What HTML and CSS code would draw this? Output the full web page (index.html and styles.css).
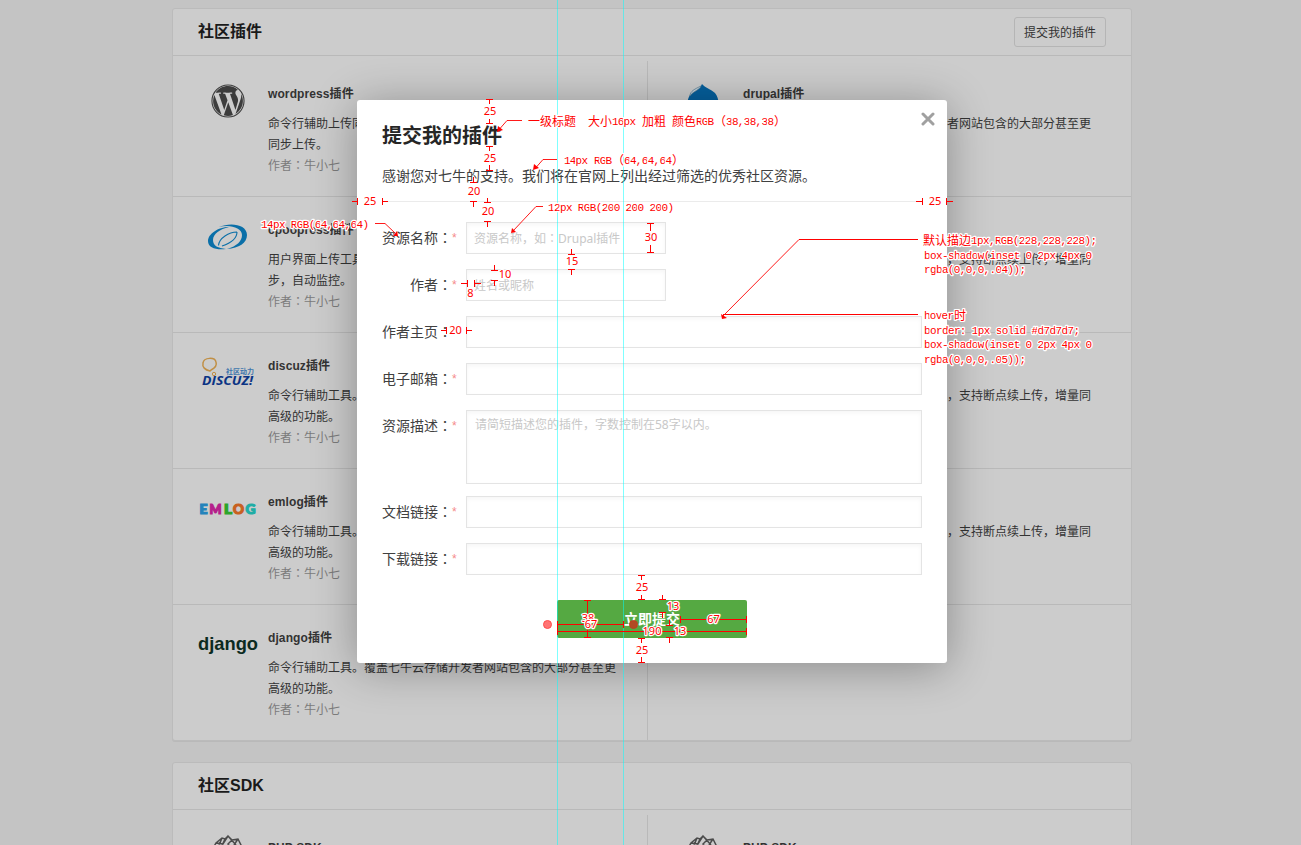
FILE: index.html
```html
<!DOCTYPE html>
<html>
<head>
<meta charset="utf-8">
<title>社区插件</title>
<link rel="stylesheet" href="styles.css">
</head>
<body>
<main class="page">
  <section class="panel">
    <header class="panel-head"><h2>社区插件</h2><a class="btn-outline">提交我的插件</a></header>
    <div class="columns">
      <div class="col col-left">
        <article class="item">
          <div class="logo"><svg width="34" height="34" viewBox="-0.3 -0.3 24.6 24.6"><path fill="#3c3c3c" d="M21.469 6.825c.84 1.537 1.318 3.3 1.318 5.175 0 3.979-2.156 7.456-5.363 9.325l3.295-9.527c.615-1.54.82-2.771.82-3.864 0-.405-.026-.78-.07-1.11m-7.981.105c.647-.03 1.232-.105 1.232-.105.582-.075.514-.93-.067-.899 0 0-1.755.135-2.88.135-1.064 0-2.85-.15-2.85-.15-.585-.03-.661.855-.075.885 0 0 .54.061 1.125.09l1.68 4.605-2.37 7.08L5.354 6.9c.649-.03 1.234-.1 1.234-.1.585-.075.516-.93-.065-.896 0 0-1.746.138-2.874.138-.2 0-.438-.008-.69-.015C4.911 3.15 8.235 1.215 12 1.215c2.809 0 5.365 1.072 7.286 2.833-.046-.003-.091-.009-.141-.009-1.06 0-1.812.923-1.812 1.914 0 .89.513 1.643 1.06 2.531.411.72.89 1.643.89 2.977 0 .915-.354 1.994-.821 3.479l-1.075 3.585-3.9-11.61.001.014zM12 22.784c-1.059 0-2.081-.153-3.048-.437l3.237-9.406 3.315 9.087c.024.053.05.101.078.149-1.12.393-2.325.609-3.582.609M1.211 12c0-1.564.336-3.05.935-4.39L7.29 21.709C3.694 19.96 1.212 16.271 1.211 12"/><circle cx="12" cy="12" r="11.6" fill="none" stroke="#3c3c3c" stroke-width=".8"/></svg></div>
          <div class="info"><h3>wordpress插件</h3><p>命令行辅助上传同步工具。覆盖七牛云存储开发者网站包含的大<br>同步上传。</p><p class="author">作者<i>：</i>牛小七</p></div>
        </article>
        <article class="item">
          <div class="logo"><svg width="42" height="28" viewBox="0 0 42 28"><g fill="#0a6fa8"><path d="M22 4C11 4 1 11 1 18c0 7 8 9 18 8-8-1-13-3-13-9C6 11 13 6 22 4Z"/><path d="M12 4C23-1 40 1 40 12c0 8-8 13-20 14 10-3 15-8 15-14C35 5 23 1 12 4Z"/></g><path d="M30 9C22 9 12 15 11.500 22.500M30 9C30 15 24 20 15 23" fill="none" stroke="#0a6fa8" stroke-width="1.100"/></svg></div>
          <div class="info"><h3>cpoopress插件</h3><p>用户界面上传工具，实现文件批量传输，支持断点续上传，增量同<br>步，自动监控。</p><p class="author">作者<i>：</i>牛小七</p></div>
        </article>
        <article class="item">
          <div class="logo"><svg width="56" height="32" viewBox="0 0 56 32"><path d="M10 14c-5-1-8-4-7-8 1-6 12-6 13-1 1 3-1 6-5 8Z" fill="none" stroke="#c08f45" stroke-width="1.5"/><circle cx="14" cy="17" r="1.7" fill="none" stroke="#c08f45"/><text class="lg-cn" x="26" y="17" textLength="28">社区动力</text><text class="lg-dz" x="2" y="28" textLength="51" lengthAdjust="spacingAndGlyphs">DISCUZ!</text></svg></div>
          <div class="info"><h3>discuz插件</h3><p>命令行辅助工具。覆盖七牛云存储开发者网站包含的大部分甚至更<br>高级的功能。</p><p class="author">作者<i>：</i>牛小七</p></div>
        </article>
        <article class="item">
          <div class="logo"><svg width="58" height="16" viewBox="0 0 58 16"><g class="lg-em"><text x="0.500" y="13" fill="#2483bb" stroke="#2483bb" textLength="8" lengthAdjust="spacingAndGlyphs">E</text><text x="10.500" y="13" fill="#b51f8b" stroke="#b51f8b" textLength="12" lengthAdjust="spacingAndGlyphs">M</text><text x="25" y="13" fill="#2ca52c" stroke="#2ca52c" textLength="8" lengthAdjust="spacingAndGlyphs">L</text><text x="34" y="13" fill="#c8601f" stroke="#c8601f" textLength="11" lengthAdjust="spacingAndGlyphs">O</text><text x="46.500" y="13" fill="#1fada5" stroke="#1fada5" textLength="10" lengthAdjust="spacingAndGlyphs">G</text></g></svg></div>
          <div class="info"><h3>emlog插件</h3><p>命令行辅助工具。覆盖七牛云存储开发者网站包含的大部分甚至更<br>高级的功能。</p><p class="author">作者<i>：</i>牛小七</p></div>
        </article>
        <article class="item">
          <div class="logo"><svg width="62" height="28" viewBox="0 0 62 28"><text class="lg-dj" x="1" y="19" textLength="60" lengthAdjust="spacingAndGlyphs">django</text></svg></div>
          <div class="info"><h3>django插件</h3><p>命令行辅助工具。覆盖七牛云存储开发者网站包含的大部分甚至更<br>高级的功能。</p><p class="author">作者<i>：</i>牛小七</p></div>
        </article>
      </div>
      <div class="col col-right">
        <article class="item">
          <div class="logo"><svg width="32" height="36" viewBox="0 0 32 36"><path d="M15 1c3 4 9 5 13 9 8 10 1 25-12 25C2 35-3 21 3 12 7 8 13 6 15 1Z" fill="#055f9c"/><path d="M14 3C13 7 6 8 3 13c0-5 5-7 11-10Z" fill="#c5d2da" stroke="#52788f" stroke-width=".7"/></svg></div>
          <div class="info"><h3>drupal插件</h3><p>命令行辅助工具。覆盖七牛云存储开发者网站包含的大部分甚至更<br>高级的功能。</p></div>
        </article>
        <article class="item"><div class="logo"></div><div class="info info-plain"><p>用户界面上传工具，实现文件批量传输，支持断点续上传，增量同</p></div></article>
        <article class="item"><div class="logo"></div><div class="info info-plain"><p>用户界面上传工具，实现文件批量传输，支持断点续上传，增量同</p></div></article>
        <article class="item"><div class="logo"></div><div class="info info-plain"><p>用户界面上传工具，实现文件批量传输，支持断点续上传，增量同</p></div></article>
        <article class="item"></article>
      </div>
    </div>
  </section>
  <section class="panel">
    <header class="panel-head"><h2>社区SDK</h2></header>
    <div class="columns">
      <div class="col col-left"><article class="item"><div class="logo"><svg width="34" height="42" viewBox="0 0 34 42"><path d="M1 16 5 9l6-5 3 1 3-3 4 4 6-1 4 8M5 9l7 1 5-8 8 9M11 4l-5 12M14 5 9 16M21 6l-4 4 6 7M27 5l-4 6" fill="none" stroke="#4b4b4b" stroke-width="1.500"/></svg></div><div class="info"><h3>PHP SDK</h3></div></article></div>
      <div class="col col-right"><article class="item"><div class="logo"><svg width="34" height="42" viewBox="0 0 34 42"><path d="M1 16 5 9l6-5 3 1 3-3 4 4 6-1 4 8M5 9l7 1 5-8 8 9M11 4l-5 12M14 5 9 16M21 6l-4 4 6 7M27 5l-4 6" fill="none" stroke="#4b4b4b" stroke-width="1.500"/></svg></div><div class="info"><h3>PHP SDK</h3></div></article></div>
    </div>
  </section>
</main>

<div class="modal">
  <svg class="close" width="14" height="14" viewBox="0 0 14 14"><path d="M2 2l10 10M12 2 2 12" stroke="#a0a0a0" stroke-width="3" stroke-linecap="round"/></svg>
  <h1>提交我的插件</h1>
  <p class="lead">感谢您对七牛的支持。我们将在官网上列出经过筛选的优秀社区资源。</p>
  <form class="form">
    <div class="field"><label>资源名称<i>：</i></label><b>*</b><div class="input short">资源名称，如<i>：</i>Drupal插件</div></div>
    <div class="field"><label>作者<i>：</i></label><b>*</b><div class="input short">姓名或昵称</div></div>
    <div class="field"><label>作者主页<i>：</i></label><b></b><div class="input"></div></div>
    <div class="field"><label>电子邮箱<i>：</i></label><b>*</b><div class="input"></div></div>
    <div class="field field-area"><label>资源描述<i>：</i></label><b>*</b><div class="input area">请简短描述您的插件，字数控制在58字以内。</div></div>
    <div class="field"><label>文档链接<i>：</i></label><b>*</b><div class="input"></div></div>
    <div class="field"><label>下载链接<i>：</i></label><b>*</b><div class="input"></div></div>
    <div class="submit">立即提交</div>
  </form>
</div>

<svg class="marks" width="1301" height="845" viewBox="0 0 1301 845">
  <path class="guide" d="M557.500 0V845M623.500 0V845"/>
  <circle class="dot" cx="547.500" cy="624.500" r="4"/>
  <circle class="dot dark" cx="633.500" cy="624.500" r="4"/>
  <path class="rule" d="M486 99.500h7M489.500 99v5M486 123.500h7M489.500 119v4M486 146.500h7M489.500 146v5M486 170.500h7M489.500 165v5
    M470 182.500h7M473.500 177v5M470 201.500h7M473.500 201v6M484 202.500h7M487.500 198v4M484 221.500h7M487.500 221v6
    M352 201.500h6M357.500 198v7M382 201.500h6M382.500 198v7M916 201.500h6M922.500 198v7M947 201.500h6M946.500 198v7
    M647 223.500h7M650.500 223v8M647 252.500h7M650.500 245v7M568 254.500h7M571.500 249v5M568 269.500h7M571.500 269v6
    M491 270.500h7M494.500 265v5M491 280.500h7M494.500 280v6M461 283.500h6M467.500 280v7M474.500 280v7M474 283.500h7
    M441 330.500h5M446.500 327v7M466.500 327v7M466 330.500h6
    M638 575.500h7M641.500 575v5M638 599.500h7M641.500 595v5M638 638.500h7M641.500 638v5M638 662.500h7M641.500 657v5
    M659 599.500h7M662.500 595v5M659 612.500h7M662.500 612v6M666 625.500h7M669.500 620v5M666 637.500h7M669.500 637v6
    M584 600.500h7M584 637.500h7M587.500 600v38M557 624.500h67M557.500 621v7M623.500 621v7
    M681 619.500h66M680.500 616v7M746.500 616v7M557 631.500h190M557.500 628v7M746.500 628v7
    M918 239.500H799M918 314.500H723"/>
  <path class="leader" d="M522 120.500H507l-7 8M557 159.500H543l-7 8M543 206.500H536L513 231M375 223.500H385L395 233M799 239.500 723 316"/>
  <path class="tip" d="M497 132l1-6 5 4ZM533 170l1-6 5 4ZM511 233l1-5 4 4ZM398 236l-5 0 4-5ZM721 314l6 4-5 1Z"/>
  <g class="num">
    <text x="490" y="115">25</text><text x="490" y="162">25</text><text x="474" y="195">20</text><text x="488" y="215">20</text>
    <text x="370" y="205">25</text><text x="935" y="205">25</text><text x="651" y="241">30</text><text x="572" y="265">15</text>
    <text x="505" y="278">10</text><text x="470.500" y="297">8</text><text x="455.500" y="334">20</text><text x="642" y="591">25</text>
    <text x="673" y="610">13</text><text x="588" y="622">38</text><text x="591" y="628">67</text><text x="713.500" y="623">67</text>
    <text x="652" y="635">190</text><text x="680" y="635">13</text><text x="642" y="654">25</text>
  </g>
  <g class="note">
    <text x="528" y="125.500">一级标题</text><text x="588" y="125.500">大小</text><text x="612" y="125" textLength="24">16px</text><text x="642" y="125.500">加粗</text><text x="672" y="125.500">颜色</text><text x="696" y="125" textLength="18">RGB</text><text x="714" y="125.500">（</text><text x="726" y="125" textLength="48">38,38,38</text><text x="774" y="125.500">）</text>
    <text x="564" y="164" textLength="24">14px</text><text x="594" y="164" textLength="18">RGB</text><text x="612" y="164.500">（</text><text x="624" y="164" textLength="48">64,64,64</text><text x="672" y="164.500">）</text>
    <text x="548" y="211" textLength="126">12px RGB(200 200 200)</text>
    <text x="261" y="228" textLength="108">14px RGB(64,64,64)</text>
    <text x="923" y="244.500">默认描边</text><text x="971" y="244" textLength="126">1px,RGB(228,228,228);</text>
    <text x="924" y="259" textLength="168">box-shadow(inset 0 2px 4px 0</text>
    <text x="924" y="273" textLength="102">rgba(0,0,0,.04));</text>
    <text x="924" y="319" textLength="30">hover</text><text x="954" y="319.500">时</text>
    <text x="924" y="334" textLength="156">border: 1px solid #d7d7d7;</text>
    <text x="924" y="348" textLength="168">box-shadow(inset 0 2px 4px 0</text>
    <text x="924" y="363" textLength="102">rgba(0,0,0,.05));</text>
  </g>
</svg>
</body>
</html>
```
FILE: styles.css
```css
* { box-sizing: border-box; margin: 0; padding: 0; }
html, body { height: 845px; overflow: hidden; }
body {
  position: relative;
  background: #c4c4c4;
  color: #333;
  font: 12px/21px "Liberation Sans", "Noto Sans CJK SC", sans-serif;
}
i { font-family: "Noto Sans CJK TC", sans-serif; font-style: normal; line-height: 0; }

.page { height: 845px; padding: 8px 0 0 172px; overflow: hidden; }
.panel {
  width: 960px;
  margin-bottom: 21px;
  background: #ccc;
  border: 1px solid #bbb;
  border-radius: 3px;
  box-shadow: 0 1px 0 #b9b9b9;
}
.panel-head {
  display: flex;
  align-items: center;
  justify-content: space-between;
  height: 47px;
  padding: 0 25px;
  border-bottom: 1px solid #b9b9b9;
}
.panel-head h2 { color: #1a1a1a; font-size: 16px; line-height: 24px; }
.btn-outline {
  width: 92px;
  height: 30px;
  border: 1px solid #b5b5b5;
  border-radius: 3px;
  line-height: 30px;
  text-align: center;
}
.columns { display: flex; padding-top: 5px; }
.col-left { width: 475px; border-right: 1px solid #b9b9b9; }
.col-right { flex: 1; }
.item { display: flex; height: 136px; border-bottom: 1px solid #b9b9b9; }
.item:last-child { height: 135px; border-bottom: 0; }
.logo {
  display: flex;
  flex: none;
  align-items: center;
  justify-content: center;
  width: 80px;
  height: 80px;
  margin-left: 15px;
}
.info { width: 352px; padding-top: 23px; white-space: nowrap; }
.info h3 { margin-bottom: 9px; font-size: 12px; line-height: 21px; letter-spacing: .1px; }
.info-plain { padding-top: 53px; }
.author { color: #7b7b7b; }
.lg-cn { fill: #4076ad; font-size: 7px; font-weight: bold; }
.lg-dz { fill: #0b3484; font: italic bold 13px "Open Sans", sans-serif; }
.lg-em { stroke-width: 1.2px; font: 900 13px Lato, sans-serif; }
.lg-dj { fill: #0b2a20; font: bold 18.5px "Liberation Sans", sans-serif; }

.modal {
  position: absolute;
  top: 100px;
  left: 357px;
  width: 590px;
  height: 563px;
  padding: 0 25px;
  background: #fff;
  border-radius: 3px;
  box-shadow: 0 5px 45px rgba(0, 0, 0, .32);
  color: #404040;
}
.close { position: absolute; top: 12px; right: 12px; }
.modal h1 { padding-top: 21px; color: #262626; font-size: 20px; line-height: 30px; }
.lead { height: 51px; padding-top: 15px; border-bottom: 1px solid #ebebeb; font-size: 14px; line-height: 20px; }
.form { display: flex; flex-direction: column; gap: 15px; padding-top: 20px; }
.field { display: flex; height: 32px; line-height: 33px; }
.field-area { height: 74px; margin-bottom: -3px; }
.field label { width: 70px; font-size: 14px; text-align: right; }
.field b { width: 14px; color: #f58b8b; font-weight: normal; }
.input {
  flex: 1;
  padding-left: 7px;
  border: 1px solid #e4e4e4;
  box-shadow: inset 0 2px 4px rgba(0, 0, 0, .04);
  color: #c8c8c8;
  font: 12px/32px "Noto Sans", "Noto Sans CJK SC", sans-serif;
}
.short { flex: none; width: 200px; }
.area { padding-left: 8px; line-height: 27px; }
.submit {
  align-self: center;
  width: 190px;
  height: 38px;
  margin-top: 10px;
  background: #55a942;
  border-radius: 2px;
  color: #fff;
  font-size: 14px;
  font-weight: bold;
  line-height: 38px;
  text-align: center;
}

.marks { position: absolute; top: 0; left: 0; }
.guide { stroke: #00ffff; stroke-opacity: .5; }
.rule { fill: none; stroke: #f00; shape-rendering: crispEdges; }
.leader { fill: none; stroke: #f00; stroke-width: .9px; }
.tip { fill: #f00; }
.dot { fill: #ff7474; stroke: #ff4c4c; }
.dark { fill: #b14a24; stroke: #bd3f20; }
.num text, .note text { fill: #f00; stroke: #fff; stroke-width: 2.4px; stroke-linejoin: round; paint-order: stroke; }
.num { font: 11px "Noto Sans", sans-serif; text-anchor: middle; }
.note { font: 11px "Liberation Mono", "Noto Sans CJK SC", monospace; }
.note text:not([textLength]) { font-size: 12px; }
```
